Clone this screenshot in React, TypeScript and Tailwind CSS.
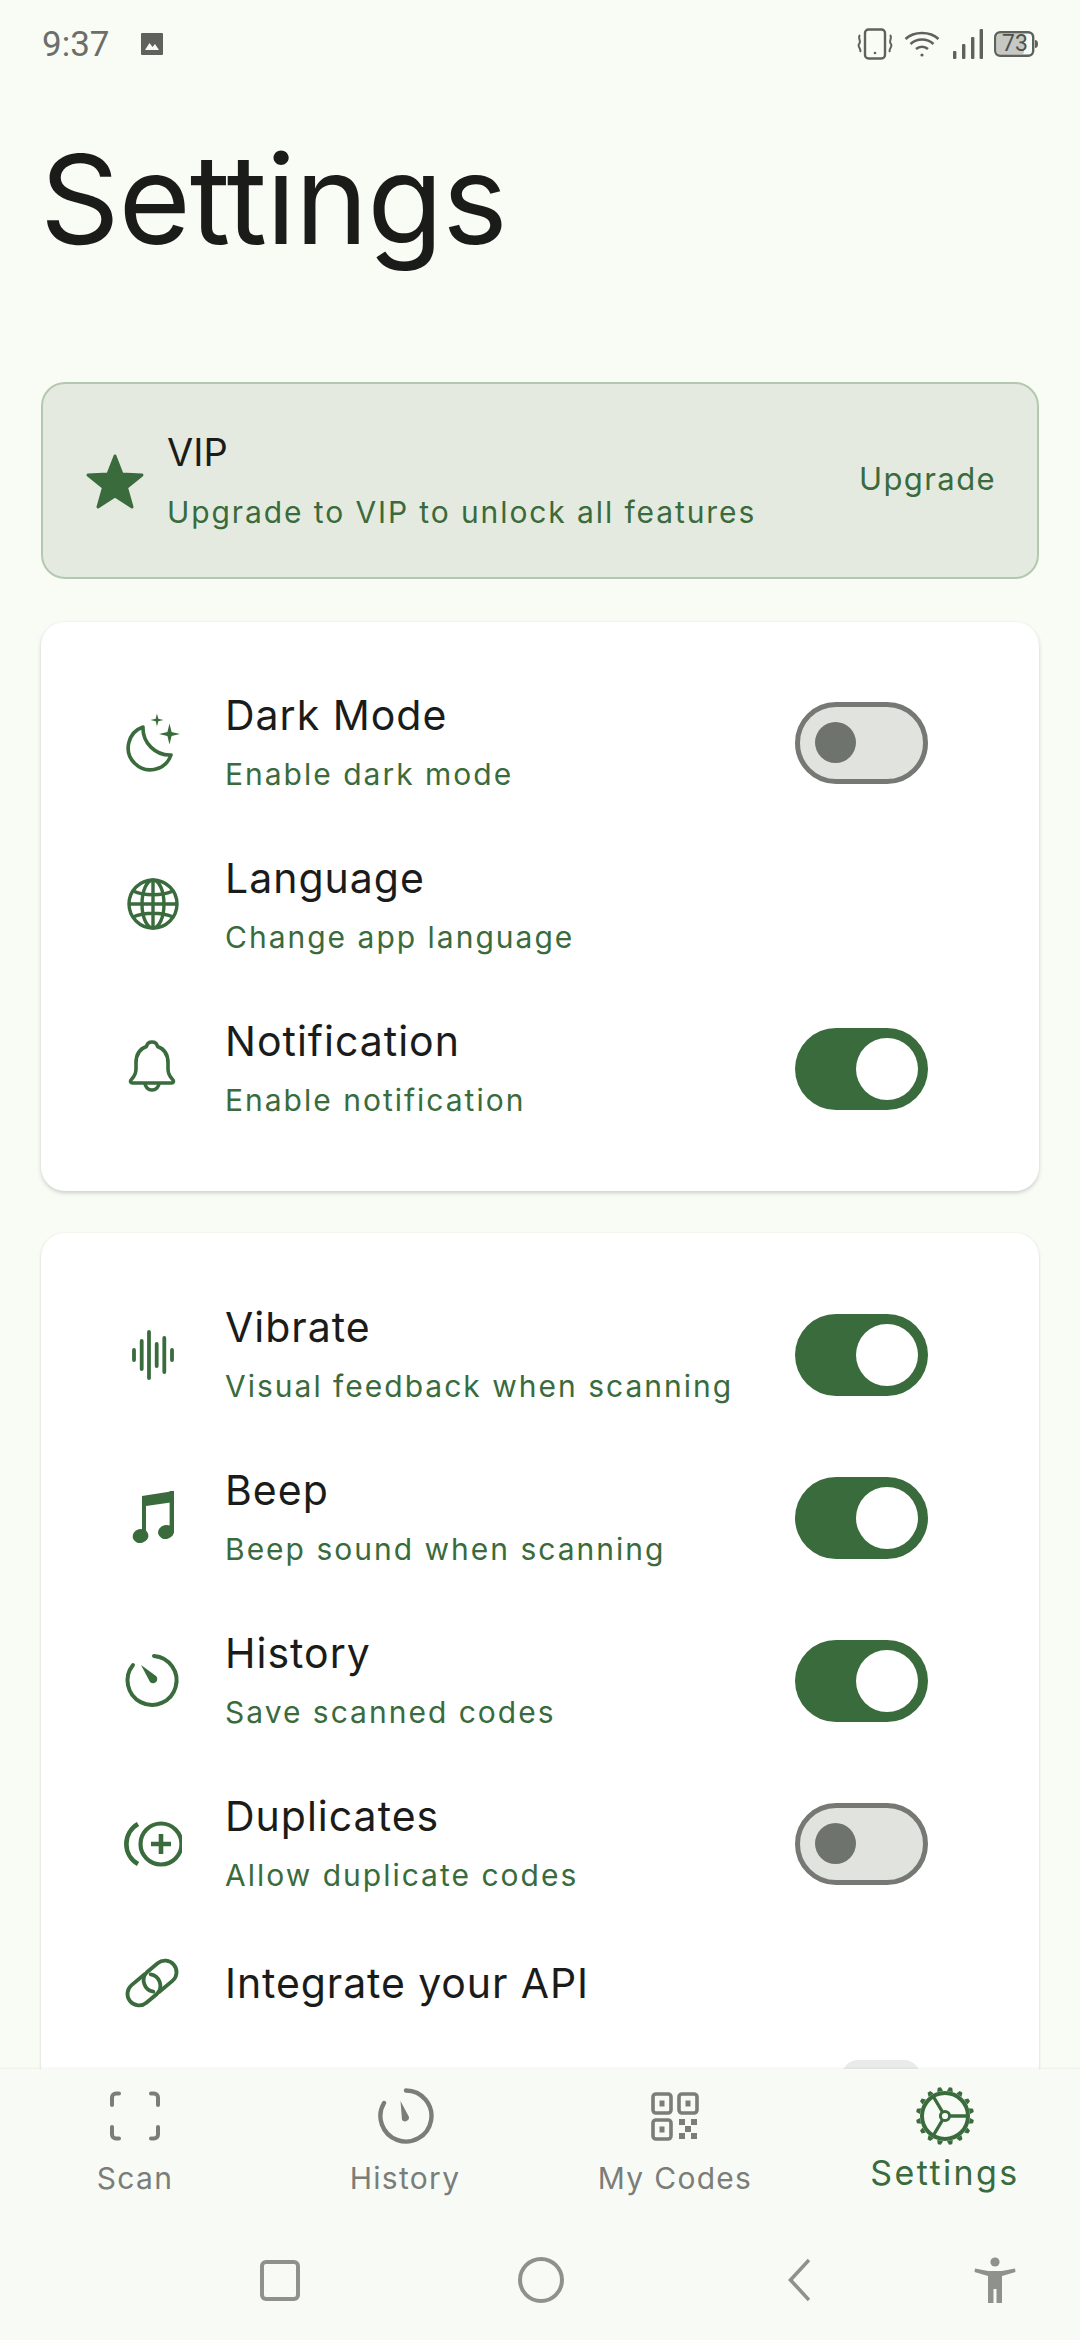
import React from "react";

const G = "#3a6b3c";
const N = "#7b7d79";

function Svg({ children, className = "w-[60px] h-[60px]" }: { children: React.ReactNode; className?: string }) {
  return (
    <svg viewBox="0 0 60 60" className={className} fill="none">
      {children}
    </svg>
  );
}

const Sparkle = ({ x, y, r, c }: { x: number; y: number; r: number; c: string }) => {
  const k = r * 0.2;
  return (
    <path
      fill={c}
      d={`M${x} ${y - r} L${x + k} ${y - k} L${x + r} ${y} L${x + k} ${y + k} L${x} ${y + r} L${x - k} ${y + k} L${x - r} ${y} L${x - k} ${y - k} Z`}
    />
  );
};

const Moon = () => (
  <Svg>
    <path d="M21 14 A22 22 0 1 0 49 42 A27 27 0 0 1 21 14 Z" stroke={G} strokeWidth="3.6" strokeLinejoin="round" />
    <Sparkle x={47.5} y={21} r={10.5} c={G} />
    <Sparkle x={35} y={7} r={6.5} c={G} />
  </Svg>
);

const Globe = () => (
  <Svg>
    <g stroke={G} strokeWidth="3.4">
      <circle cx="31" cy="28" r="24" />
      <ellipse cx="31" cy="28" rx="11" ry="24" />
      <path d="M31 4 V52 M7 28 H55 M11 15 C22 20 40 20 51 15 M11 41 C22 36 40 36 51 41" />
    </g>
  </Svg>
);

const Bell = () => (
  <Svg>
    <g stroke={G} strokeWidth="3.6" strokeLinejoin="round">
      <path d="M30 3 c-3 0 -5 2 -5.5 4.5 C17 10 14 16 14 24 v6 c0 5 -2 8 -5 11 c-1 1.5 -0.5 3 1.5 3 h39 c2 0 2.5 -1.5 1.5 -3 c-3 -3 -5 -6 -5 -11 v-6 C46 16 43 10 35.5 7.5 C35 5 33 3 30 3 Z" />
      <path d="M23 44 a7 7 0 0 0 14 0" />
    </g>
  </Svg>
);

const Wave = () => (
  <Svg>
    <g stroke={G} strokeWidth="3.8" strokeLinecap="round">
      <path d="M12 25 V35 M19.7 16 V44 M27 7 V53 M34.7 19 V41 M42.3 13 V47 M50 25 V35" />
    </g>
  </Svg>
);

const Music = () => (
  <Svg>
    <g fill={G}>
      <path d="M20 8 L52 3 V14 L24 18 V47 H20 Z" />
      <rect x="47.6" y="3" width="4.4" height="42" />
      <ellipse cx="18.5" cy="48" rx="8" ry="7" transform="rotate(-15 18.5 48)" />
      <ellipse cx="44" cy="44" rx="8" ry="7" transform="rotate(-15 44 44)" />
    </g>
  </Svg>
);

const Timer = ({ nav = false, c = G, sw = 4 }: { nav?: boolean; c?: string; sw?: number }) => (
  <Svg>
    {nav ? (
      <>
        <path d="M31 4.5 A25.5 25.5 0 1 1 9 17" stroke={c} strokeWidth={sw} strokeLinecap="round" />
        <path d="M25.5 15 L34 31 a4 4 0 0 1 -7 3 Z" fill={c} />
      </>
    ) : (
      <>
        <path d="M32 5 A24.5 24.5 0 1 1 11 14" stroke={c} strokeWidth={sw} strokeLinecap="round" />
        <path d="M19 14 L34 25 a4 4 0 0 1 -6 6 Z" fill={c} />
      </>
    )}
  </Svg>
);

const Dup = () => (
  <Svg>
    <g stroke={G} strokeWidth="4.2">
      <circle cx="39" cy="30" r="20.5" />
      <path d="M39 20 V40 M29 30 H49" strokeWidth="4.6" />
      <path d="M16 10 A23 23 0 0 0 16 50" strokeWidth="4.6" />
    </g>
  </Svg>
);

const LinkIcon = () => (
  <Svg>
    <g transform="rotate(-40 30 30)" stroke={G} strokeWidth="3.8" strokeLinecap="round">
      <path d="M30 18.5 H13 a11.5 11.5 0 0 0 0 23 H27 a11.5 11.5 0 0 0 7.5 -19" />
      <path d="M30 41.5 H47 a11.5 11.5 0 0 0 0 -23 H33 a11.5 11.5 0 0 0 -7.5 19" />
    </g>
  </Svg>
);

const Scan = () => (
  <Svg>
    <g stroke={N} strokeWidth="4" strokeLinecap="round">
      <path d="M14 7.5 H11 a4 4 0 0 0 -4 4 V19 M46 7.5 H49 a4 4 0 0 1 4 4 V19 M14 52.5 H11 a4 4 0 0 1 -4 -4 V41 M46 52.5 H49 a4 4 0 0 0 4 -4 V41" />
    </g>
  </Svg>
);

const Qr = () => (
  <Svg>
    <g stroke={N} strokeWidth="3.6">
      <rect x="8" y="8" width="18" height="19" rx="3" />
      <rect x="34" y="8" width="18" height="19" rx="3" />
      <rect x="8" y="34" width="18" height="19" rx="3" />
    </g>
    <g fill={N}>
      <rect x="14.5" y="14.5" width="5" height="6" />
      <rect x="40.5" y="14.5" width="5" height="6" />
      <rect x="14.5" y="40.5" width="5" height="6" />
      <rect x="34" y="33" width="6" height="6" />
      <rect x="46" y="33" width="6" height="6" />
      <rect x="40" y="40" width="6" height="6" />
      <rect x="34" y="47" width="6" height="6" />
      <rect x="46" y="47" width="6" height="6" />
    </g>
  </Svg>
);

const Gear = () => (
  <Svg>
    <g stroke={G}>
      <circle cx="30" cy="30" r="23" strokeWidth="4" />
      <circle cx="30" cy="30" r="4.6" strokeWidth="3" />
      <path d="M35 30 H53 M27.5 26 L18 10 M27.5 34 L18 50" strokeWidth="3.4" />
    </g>
    <g fill={G}>
      {Array.from({ length: 16 }).map((_, i) => (
        <path key={i} d="M27 5 L28.4 1 H31.6 L33 5 Z" transform={`rotate(${i * 22.5 + 11.25} 30 30)`} />
      ))}
    </g>
  </Svg>
);

const Toggle = ({ on }: { on: boolean }) =>
  on ? (
    <div className="w-[133px] h-[82px] rounded-full bg-[#3a6b3c] flex items-center justify-end pr-[10px] shrink-0">
      <div className="w-[62px] h-[62px] rounded-full bg-white" />
    </div>
  ) : (
    <div className="w-[133px] h-[82px] rounded-full bg-[#e1e3de] border-[5px] border-[#767873] flex items-center pl-[15px] shrink-0">
      <div className="w-[41px] h-[41px] rounded-full bg-[#6f736e]" />
    </div>
  );

const Row = ({ icon, title, sub, toggle }: { icon: React.ReactNode; title: string; sub: string; toggle?: boolean }) => (
  <div className="h-[163px] flex items-center pl-[81px] pr-[111px]">
    <div className="w-[60px] h-[60px] shrink-0">{icon}</div>
    <div className="ml-[43px] flex-1 min-w-0 -mt-[1px]">
      <div className="text-[41px] leading-[50px] tracking-[1px] text-[#1b1c1a]">{title}</div>
      <div className="text-[30px] leading-[40px] tracking-[2px] text-[#3a6b3c] mt-[14px] whitespace-nowrap">{sub}</div>
    </div>
    {toggle !== undefined && <Toggle on={toggle} />}
  </div>
);

const Tab = ({ icon, label, active }: { icon: React.ReactNode; label: string; active?: boolean }) => (
  <div className="flex flex-col items-center">
    <div className="w-[60px] h-[60px]">{icon}</div>
    <div
      className={
        active
          ? "mt-[7px] text-[34px] leading-[40px] tracking-[2.4px] text-[#3a6b3c]"
          : "mt-[12px] text-[30px] leading-[40px] tracking-[1.3px] text-[#7b7d79]"
      }
    >
      {label}
    </div>
  </div>
);

export default function App() {
  return (
    <div className="w-[1080px] h-[2340px] overflow-hidden flex flex-col bg-[#f8fcf5] font-['Inter',sans-serif]">
      <div className="flex-1 min-h-0 overflow-hidden">
        <div className="h-[88px] flex items-center pl-[42px] pr-[42px] font-['Roboto',sans-serif] text-[#6c6e6a]">
          <span className="text-[35px] font-normal leading-none">9:37</span>
          <svg viewBox="0 0 24 24" className="w-[24px] h-[24px] ml-[30px]">
            <path fill="#5f615d" d="M2 1 H22 a1 1 0 0 1 1 1 V22 a1 1 0 0 1 -1 1 H2 a1 1 0 0 1 -1 -1 V2 a1 1 0 0 1 1 -1 Z" />
            <path fill="#f8fcf5" d="M5 18 L9.5 11 L12.5 15 L15 12 L19 18 Z" />
          </svg>
          <div className="flex-1" />
          <svg viewBox="0 0 36 32" className="w-[36px] h-[32px]" fill="none" stroke="#5f615d">
            <rect x="8" y="1.5" width="20" height="29" rx="3.5" strokeWidth="2.4" />
            <circle cx="18" cy="25" r="1.3" fill="#5f615d" stroke="none" />
            <path d="M3 7 C0 10 5 13 2 16 C0 19 5 21 3 24 M33 7 C36 10 31 13 34 16 C36 19 31 21 33 24" strokeWidth="2" />
          </svg>
          <svg viewBox="0 0 36 28" className="w-[36px] h-[28px] ml-[11px]" fill="none" stroke="#5f615d" strokeWidth="2.6">
            <path d="M1.5 9 C10 1 26 1 34.5 9 M6.5 14 C13 8 23 8 29.5 14 M12 19 C15.5 16 20.5 16 24 19" />
            <circle cx="18" cy="25" r="1.6" fill="#5f615d" stroke="none" />
          </svg>
          <svg viewBox="0 0 30 30" className="w-[30px] h-[30px] ml-[13px]" fill="#5f615d">
            <rect x="0" y="22" width="3.4" height="8" rx="1" />
            <rect x="9" y="15" width="3.4" height="15" rx="1" />
            <rect x="18" y="8" width="3.4" height="22" rx="1" />
            <rect x="26.6" y="0" width="3.4" height="30" rx="1" />
          </svg>
          <div className="relative w-[44px] h-[26px] ml-[11px]">
            <svg viewBox="0 0 44 26" className="w-[44px] h-[26px]" fill="none">
              <rect x="3" y="3" width="27" height="20" rx="2" fill="#c6c8c4" />
              <rect x="1.2" y="1.2" width="38" height="23.6" rx="5" stroke="#5f615d" strokeWidth="2.4" />
              <path d="M41 9 a3 4 0 0 1 0 8 Z" fill="#5f615d" />
            </svg>
            <span className="absolute left-[8px] top-[1px] text-[23px] leading-[24px] text-[#4f514d]">73</span>
          </div>
        </div>

        <h1 className="h-[294px] pl-[40px] pt-[41px] box-border text-[124px] leading-[140px] font-normal tracking-[-1px] text-[#1b1c1a]">
          Settings
        </h1>

        <div className="mx-[41px] h-[197px] rounded-[24px] border-2 border-[#b4c8b0] bg-[#e5eae0] flex items-center pl-[42px] pr-[41px]">
          <svg viewBox="0 0 60 58" className="w-[60px] h-[58px] shrink-0">
            <path
              fill={G}
              stroke={G}
              strokeWidth="3"
              strokeLinejoin="round"
              d="M30 4 L37 22 L57 23 L41.5 35.5 L47 55 L30 44 L13 55 L18.5 35.5 L3 23 L23 22 Z"
            />
          </svg>
          <div className="ml-[22px] flex-1 -mt-[1px]">
            <div className="text-[38px] leading-[48px] text-[#1b1c1a]">VIP</div>
            <div className="text-[30px] leading-[40px] tracking-[1.9px] text-[#3a6b3c] mt-[16px] whitespace-nowrap">
              Upgrade to VIP to unlock all features
            </div>
          </div>
          <div className="text-[31px] leading-[40px] tracking-[1.4px] text-[#3a6b3c] -mt-[4px]">Upgrade</div>
        </div>

        <div className="mx-[41px] mt-[43px] pt-[39px] pb-[41px] rounded-[24px] bg-white shadow-[0_2px_4px_rgba(0,0,0,0.18)]">
          <Row icon={<Moon />} title="Dark Mode" sub="Enable dark mode" toggle={false} />
          <Row icon={<Globe />} title="Language" sub="Change app language" />
          <Row icon={<Bell />} title="Notification" sub="Enable notification" toggle={true} />
        </div>

        <div className="mx-[41px] mt-[42px] pt-[40px] pb-[40px] rounded-[24px] bg-white shadow-[0_1px_3px_rgba(0,0,0,0.18)]">
          <Row icon={<Wave />} title="Vibrate" sub="Visual feedback when scanning" toggle={true} />
          <Row icon={<Music />} title="Beep" sub="Beep sound when scanning" toggle={true} />
          <Row icon={<Timer />} title="History" sub="Save scanned codes" toggle={true} />
          <Row icon={<Dup />} title="Duplicates" sub="Allow duplicate codes" toggle={false} />
          <div className="h-[116px] flex items-center pl-[81px]">
            <div className="w-[60px] h-[60px] shrink-0">
              <LinkIcon />
            </div>
            <div className="ml-[43px] text-[41px] leading-[50px] tracking-[0.9px] text-[#1b1c1a]">Integrate your API</div>
          </div>
          <div className="mt-[19px] ml-[801px] w-[78px] h-[60px] rounded-[16px] bg-[#e8ebea]" />
        </div>
      </div>

      <div className="h-[271px] shrink-0 bg-[#f8faf6] shadow-[0_-1px_2px_rgba(0,0,0,0.05)] relative">
        <div className="grid grid-cols-4 pt-[17px] h-[171px]">
          <Tab icon={<Scan />} label="Scan" />
          <Tab icon={<Timer nav c={N} sw={4.4} />} label="History" />
          <Tab icon={<Qr />} label="My Codes" />
          <Tab icon={<Gear />} label="Settings" active />
        </div>
        <div className="flex items-center h-[80px] pl-[260px]">
          <div className="w-[40px] h-[41px] rounded-[6px] border-[4px] border-[#8f918d]" />
          <div className="ml-[218px] w-[46px] h-[46px] rounded-full border-[4px] border-[#8f918d]" />
          <svg viewBox="0 0 22 42" className="ml-[224px] w-[22px] h-[42px]" fill="none">
            <path d="M21 1 L2.5 21 L21 41" stroke="#8f918d" strokeWidth="3.6" />
          </svg>
          <svg viewBox="0 0 42 46" className="ml-[164px] w-[42px] h-[46px]" fill="#8f918d">
            <circle cx="21" cy="5" r="4.6" />
            <path d="M1 11.5 L14 14 H28 L41 11.5 L41.5 15 L28 19 V46 H22.5 V32 H19.5 V46 H14 V19 L0.5 15 Z" />
          </svg>
        </div>
      </div>
    </div>
  );
}
